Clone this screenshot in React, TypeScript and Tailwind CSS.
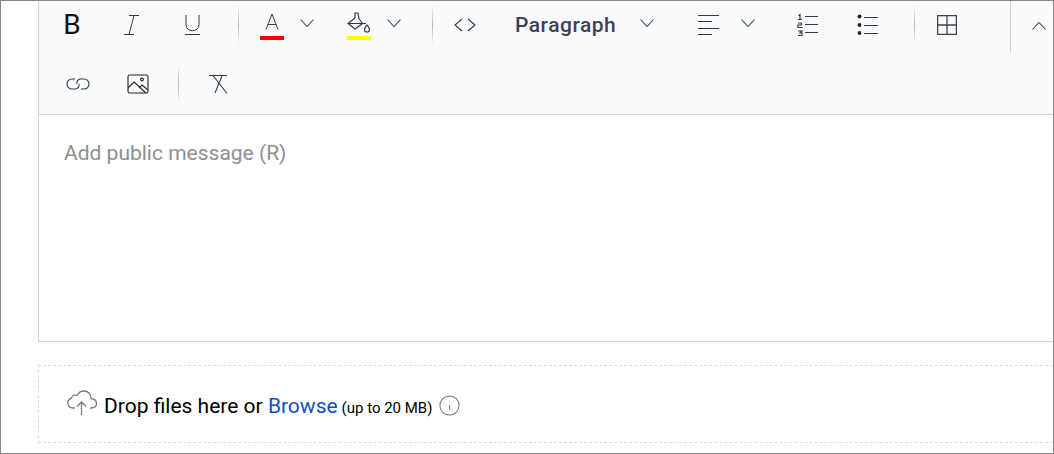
import { Info } from 'lucide-react';

const Chevron = ({ up = false }: { up?: boolean }) => (
  <svg width="14" height="8" viewBox="0 0 14 8" fill="none" stroke="#3f4654" strokeWidth="1.1" className={up ? 'mt-[2px] shrink-0' : 'mt-[-5px] shrink-0'}>
    <path d={up ? 'M.5 7.500 7 .5l6.500 7' : 'M.5.5 7 7.500 13.500.5'} />
  </svg>
);

const Sep = ({ className }: { className: string }) => (
  <div className={`w-px bg-linear-to-b from-transparent via-[#b4b8c0] to-transparent shrink-0 ${className}`} />
);

const stroke = { fill: 'none', stroke: '#333a45', strokeWidth: 1 };

const App = () => {
  return (
    <div className="w-[1054px] h-[454px] border border-[#858585] bg-white pl-[37px] overflow-hidden font-['Roboto',sans-serif]">
      {/* Editor */}
      <div className="h-[341px] border-l border-b border-[#c9d3e0] flex flex-col">
        <div className="h-[114px] bg-[#f9fafc] border-b border-[#c9d3e0] shrink-0">
          {/* Row 1 */}
          <div className="h-[48px] flex items-center pl-[2px]">
            <button className="w-[60px] pl-[2px] flex justify-center text-[28px] leading-none text-[#111]">B</button>
            <button className="w-[60px] flex justify-center">
              <svg width="20" height="24" viewBox="0 0 20 24" {...stroke}>
                <path d="M8 2.500h10M3 21.500h10M13 2.500 8 21.500" />
              </svg>
            </button>
            <button className="w-[60px] pl-[2px] flex justify-center">
              <svg width="20" height="24" viewBox="0 0 20 24" {...stroke}>
                <path d="M4 2v10c0 7.500 13 7.500 13 0V2M3 21.500h15" />
              </svg>
            </button>
            <Sep className="h-10 ml-[17px]" />
            <div className="ml-[21px] w-6 h-7 mt-[2px] flex flex-col">
              <svg width="24" height="24" viewBox="0 0 24 24" {...stroke}>
                <path d="M6 17.500 12 2l6 15.500M7.800 12.500h8.400" />
              </svg>
              <div className="w-6 h-1 bg-[#ff0000]" />
            </div>
            <div className="ml-4"><Chevron /></div>
            <div className="ml-[33px] w-6 h-7 mt-[2px] flex flex-col">
              <svg width="24" height="24" viewBox="0 0 24 24" {...stroke} strokeWidth={1.2}>
                <path d="M8 6V1h3l1 6M8 6l-7 5.500L8 17l7.500-5.500L11.500 6M1 11.500h18" />
                <path d="M20 13c-1.500 2-2.500 3-2.500 4.500a2.500 2.500 0 0 0 5 0c0-1.500-1-2.500-2.500-4.500Z" />
              </svg>
              <div className="w-6 h-1 bg-[#ffff00]" />
            </div>
            <div className="ml-4"><Chevron /></div>
            <Sep className="h-10 ml-[31px]" />
            <svg width="24" height="14" viewBox="0 0 24 14" {...stroke} strokeWidth={1.1} className="ml-5 shrink-0">
              <path d="M9 1 2 7l7 6M15 1l7 6-7 6" />
            </svg>
            <span className="w-[101px] ml-[38px] text-[21px] font-medium tracking-[0.5px] text-[#3a4457] leading-none whitespace-nowrap">Paragraph</span>
            <div className="ml-6"><Chevron /></div>
            <svg width="24" height="24" viewBox="0 0 24 24" {...stroke} className="ml-[43px] shrink-0">
              <path d="M1 2.500h21M1 8.500h14M1 15.500h21M1 21.500h14" />
            </svg>
            <div className="ml-5"><Chevron /></div>
            <svg width="24" height="24" viewBox="0 0 24 24" {...stroke} className="ml-[42px] shrink-0">
              <path d="M8 3.500h13M8 11.500h13M8 19.500h13" />
              <path d="M1.500 2.500l1.500-1v5M1 6.500h4M1 10h3.500v2H1v2.500h4.500M1 18h4l-2 2h2v2.500H1" strokeWidth={1.2} />
            </svg>
            <svg width="24" height="24" viewBox="0 0 24 24" className="ml-9 shrink-0">
              <path d="M7 4.500h14M7 12.500h14M7 20.500h14" fill="none" stroke="#333a45" />
              <circle cx="2.500" cy="3.500" r="1.900" fill="#222" />
              <circle cx="2.500" cy="12" r="1.900" fill="#222" />
              <circle cx="2.500" cy="20" r="1.900" fill="#222" />
            </svg>
            <Sep className="h-10 ml-[33px]" />
            <svg width="20" height="20" viewBox="0 0 20 20" fill="none" stroke="#3c424d" strokeWidth="1.3" className="ml-[22px] shrink-0">
              <rect x=".6" y=".6" width="18.800" height="18.800" />
              <path d="M10 .6v18.800M.6 10h18.800" />
            </svg>
            <div className="w-px h-[52px] bg-[#c9d3e0] ml-[53px] self-start shrink-0" />
            <div className="ml-[21px]"><Chevron up /></div>
          </div>
          {/* Row 2 */}
          <div className="h-[65px] pt-[5px] flex items-center pl-[9px]">
            <button className="w-[60px] flex justify-center">
              <svg width="24" height="16" viewBox="0 0 24 16" {...stroke} strokeWidth={1.1}>
                <path d="M9 3H6a5 5 0 0 0 0 10h4a4 4 0 0 0 3-5" />
                <path d="M15 13h3a5 5 0 0 0 0-10h-4a4 4 0 0 0-3 5" />
              </svg>
            </button>
            <button className="w-[60px] flex justify-center">
              <svg width="22" height="20" viewBox="0 0 22 20" fill="none" stroke="#222" strokeWidth="1.1">
                <rect x="1" y="1" width="20" height="18" rx="1.500" />
                <path d="M1 14l6-6 12 11M12 14l3-3 6 5" />
                <circle cx="15" cy="5.500" r="1.400" />
              </svg>
            </button>
            <Sep className="ml-[10px] h-[38px]" />
            <button className="ml-[28px] w-6 flex justify-center">
              <svg width="22" height="22" viewBox="0 0 22 22" {...stroke} strokeWidth={1.1}>
                <path d="M1 2.500h18M14 3 7 20M5 2.500 19 20.500" />
              </svg>
            </button>
          </div>
        </div>
        <div className="flex-1 px-[25px] pt-[26px] text-[21px] leading-6 text-[#8f8f8f]">Add public message (R)</div>
      </div>

      {/* Dropzone */}
      <div className="mt-[23px] h-[78px] border border-dashed border-[#dcdcdc] border-r-0 flex items-center pl-[27px]">
        <svg width="32" height="26" viewBox="0 0 32 26" fill="none" stroke="#7b7b7b" strokeWidth="1.3" className="mr-[6px] mt-[-3px]">
          <path d="M9 18H6.500a5 5 0 0 1-1-9.800C6 5 8.500 4.500 11 5.500 12.500 2.500 15 1 18 1c4 0 7 3 7 7.500 3.500.5 5.500 2.500 5.500 5S28.500 18 25 18h-1" />
          <path d="M15.500 25V12M11 16.500 15.500 12l4.500 4.500" />
        </svg>
        <span className="text-[21px] text-black leading-none mt-[5px] whitespace-nowrap">Drop files here or <span className="text-[#0f4fc4]">Browse</span></span>
        <span className="text-[15px] text-black leading-none ml-1 mt-[8px] whitespace-nowrap">(up to 20 MB)</span>
        <Info className="w-[23px] h-[23px] text-[#7b7b7b] ml-[6px] mt-[3px]" strokeWidth={1.1} />
      </div>
    </div>
  );
};

export default App;
